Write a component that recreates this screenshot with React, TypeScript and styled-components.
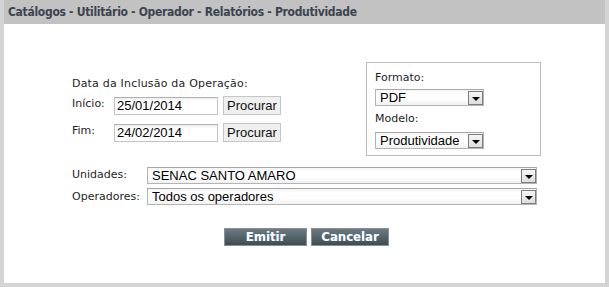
import styled, { createGlobalStyle } from "styled-components";

const GlobalStyle = createGlobalStyle`
	html, body {
		margin: 0;
		padding: 0;
		background: #ffffff;
	}
	* {
		box-sizing: border-box;
	}
`;

const Frame = styled.div`
	width: 609px;
	height: 287px;
	display: flex;
	flex-direction: column;
	background: #d4d4d4;
	padding: 0 4px 4px 4px;
`;

const Header = styled.div`
	height: 24px;
	flex: none;
	background: #c2c2c2;
	padding-left: 4px;
	display: flex;
	align-items: center;
	font-family: "DejaVu Sans Condensed", "DejaVu Sans", sans-serif;
	font-weight: bold;
	font-size: 12px;
	letter-spacing: -0.3px;
	color: #3b4550;
`;

const Body = styled.div`
	flex: 1;
	background: #ffffff;
	padding: 38px 64px 0 68px;
	font-family: "DejaVu Sans", Verdana, sans-serif;
	font-size: 11px;
	color: #1e1e1e;
`;

const TopRow = styled.div`
	display: flex;
	align-items: flex-start;
`;

const DateBlock = styled.div`
	padding-top: 15px;
	display: flex;
	flex-direction: column;
`;

const Heading = styled.div`
	line-height: 14px;
	margin-bottom: 5px;
	letter-spacing: 0.2px;
`;

const DateRow = styled.div`
	display: flex;
	align-items: center;
	height: 19px;
	margin-bottom: ${(p: { $gap?: number }) => p.$gap ?? 0}px;
`;

const Label = styled.span<{ $width: number; $raise?: number }>`
	width: ${(p) => p.$width}px;
	flex: none;
	position: relative;
	top: -${(p) => p.$raise ?? 0}px;
`;

const TextInput = styled.div`
	width: 104px;
	height: 18px;
	border: 1px solid #c4c4c4;
	border-top-color: #b0b0b0;
	background: linear-gradient(#ececec 0, #ffffff 3px);
	font-family: "Liberation Sans", Arial, sans-serif;
	font-size: 13px;
	line-height: 16px;
	padding-left: 2px;
	color: #000;
`;

const FindButton = styled.div`
	margin-left: 5px;
	height: 19px;
	padding: 0 3px;
	border: 1px solid #c6c6c6;
	background: #efefef;
	font-family: "Liberation Sans", Arial, sans-serif;
	font-size: 13px;
	line-height: 17px;
	color: #111;
`;

const OptionsBox = styled.div`
	margin-left: auto;
	width: 175px;
	height: 94px;
	border: 1px solid #bdbdbd;
	padding: 8px 0 0 8px;
	display: flex;
	flex-direction: column;
`;

const BoxLabel = styled.div<{ $gap: number; $top?: number }>`
	line-height: 14px;
	margin-top: ${(p) => p.$top ?? 0}px;
	margin-bottom: ${(p) => p.$gap}px;
`;

const Select = styled.div<{ $width?: number }>`
	width: ${(p) => (p.$width ? `${p.$width}px` : "auto")};
	flex: ${(p) => (p.$width ? "none" : "1")};
	height: 17px;
	display: flex;
	align-items: center;
	border: 1px solid #b4b4b4;
	border-top-color: #a6a6a6;
	background: linear-gradient(#f4f4f4, #ffffff 4px, #ffffff 60%, #f1f1f1);
	font-family: "Liberation Sans", Arial, sans-serif;
	font-size: 13px;
	color: #000;
	padding: 0 0 0 4px;
`;

const SelectValue = styled.span`
	flex: 1;
	line-height: 15px;
	white-space: nowrap;
	overflow: hidden;
`;

const Arrow = styled.span`
	width: 15px;
	height: 14px;
	flex: none;
	border: 1px solid #7c7c7c;
	background: linear-gradient(#f6f6f6, #dedede);
	display: flex;
	align-items: center;
	justify-content: center;
	&::after {
		content: "";
		margin-top: 2px;
		border-left: 4px solid transparent;
		border-right: 4px solid transparent;
		border-top: 4px solid #000;
	}
`;

const FieldRow = styled.div<{ $top: number }>`
	display: flex;
	align-items: center;
	margin-top: ${(p) => p.$top}px;
	padding-right: 4px;
`;

const Actions = styled.div`
	display: flex;
	justify-content: center;
	gap: 4px;
	margin-top: 23px;
`;

const ActionButton = styled.div<{ $width: number }>`
	width: ${(p) => p.$width}px;
	height: 18px;
	border: 1px solid #8a8f92;
	background: linear-gradient(#6b7b81, #3f4d53);
	color: #ffffff;
	font-family: "DejaVu Sans Condensed", "DejaVu Sans", sans-serif;
	font-weight: bold;
	font-size: 13px;
	line-height: 16px;
	text-align: center;
	text-shadow: 1px 0 0 rgba(120, 170, 255, 0.35);
`;

const Dropdown = ({ value, width }: { value: string; width?: number }) => (
	<Select $width={width}>
		<SelectValue>{value}</SelectValue>
		<Arrow />
	</Select>
);

export default function App() {
	return (
		<>
			<GlobalStyle />
			<Frame>
				<Header>Catálogos - Utilitário - Operador - Relatórios - Produtividade</Header>
				<Body>
					<TopRow>
						<DateBlock>
							<Heading>Data da Inclusão da Operação:</Heading>
							<DateRow $gap={8}>
								<Label $width={42} $raise={2}>Início:</Label>
								<TextInput>25/01/2014</TextInput>
								<FindButton>Procurar</FindButton>
							</DateRow>
							<DateRow>
								<Label $width={42} $raise={2}>Fim:</Label>
								<TextInput>24/02/2014</TextInput>
								<FindButton>Procurar</FindButton>
							</DateRow>
						</DateBlock>
						<OptionsBox>
							<BoxLabel $gap={4}>Formato:</BoxLabel>
							<Dropdown value="PDF" width={109} />
							<BoxLabel $gap={6} $top={6}>
								Modelo:
							</BoxLabel>
							<Dropdown value="Produtividade" width={109} />
						</OptionsBox>
					</TopRow>
					<FieldRow $top={11}>
						<Label $width={75} $raise={1}>Unidades:</Label>
						<Dropdown value="SENAC SANTO AMARO" />
					</FieldRow>
					<FieldRow $top={4}>
						<Label $width={75}>Operadores:</Label>
						<Dropdown value="Todos os operadores" />
					</FieldRow>
					<Actions>
						<ActionButton $width={83}>Emitir</ActionButton>
						<ActionButton $width={78}>Cancelar</ActionButton>
					</Actions>
				</Body>
			</Frame>
		</>
	);
}
